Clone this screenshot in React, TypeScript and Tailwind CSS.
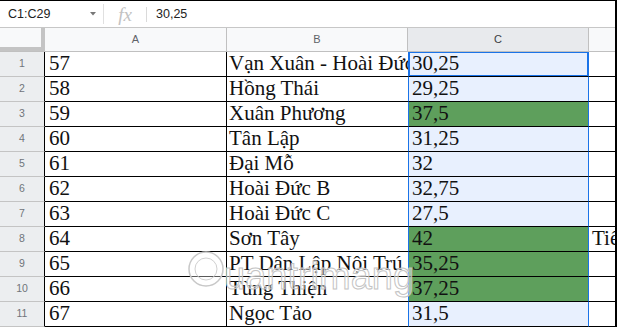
import React from "react"

const rows = [
  { a: "57", b: "Vạn Xuân - Hoài Đức", c: "30,25" },
  { a: "58", b: "Hồng Thái", c: "29,25" },
  { a: "59", b: "Xuân Phương", c: "37,5", green: true },
  { a: "60", b: "Tân Lập", c: "31,25" },
  { a: "61", b: "Đại Mỗ", c: "32" },
  { a: "62", b: "Hoài Đức B", c: "32,75" },
  { a: "63", b: "Hoài Đức C", c: "27,5" },
  { a: "64", b: "Sơn Tây", c: "42", green: true, d: "Tiến Thịnh" },
  { a: "65", b: "PT Dân Lập Nội Trú", c: "35,25", green: true },
  { a: "66", b: "Tùng Thiện", c: "37,25", green: true },
  { a: "67", b: "Ngọc Tảo", c: "31,5" },
]

const cellText = "font-['Liberation_Serif',serif] text-[21px] leading-none text-[#111]"

export default function App() {
  return (
    <div className="relative w-[617px] h-[327px] overflow-hidden bg-white border-t border-r-2 border-black font-['Liberation_Sans',Arial,sans-serif]">
      {/* formula bar */}
      <div className="flex items-center h-[27px] border-b border-[#c7c7c7] text-[12.5px] text-[#222]">
        <div className="w-[88px] pl-[8px]">C1:C29</div>
        <svg width="6" height="4" viewBox="0 0 6 4" className="ml-[2px]">
          <path d="M0 0h6L3 3.5z" fill="#777" />
        </svg>
        <div className="ml-[7px] w-px h-[20px] bg-[#e0e0e0]" />
        <div className="w-[42px] text-center font-['Liberation_Serif',serif] italic text-[19px] text-[#c2c2c2] leading-none">
          fx
        </div>
        <div className="w-px h-[15px] bg-[#dadada]" />
        <div className="pl-[9px]">30,25</div>
      </div>

      {/* column headers */}
      <div className="flex h-[24px] border-b border-[#c0c0c0] text-[11px] text-[#5f6368] bg-[#f8f9fa]">
        <div className="w-[45px] border-r-4 border-b-4 border-[#c4c4c4] bg-[#f8f9fa]" />
        <div className="w-[182px] flex items-center justify-center border-r border-[#c0c0c0]">A</div>
        <div className="w-[181px] flex items-center justify-center border-r border-[#c0c0c0]">B</div>
        <div className="w-[181px] flex items-center justify-center border-r border-[#c0c0c0] bg-[#e8eaed] text-[#3c4043]">
          C
        </div>
        <div className="flex-1" />
      </div>

      {/* rows */}
      {rows.map((r, i) => (
        <div key={i} className="flex h-[25px]">
          <div className="w-[45px] shrink-0 flex items-center justify-center border-r border-black border-b border-b-[#c4c4c4] bg-[#eceef0] text-[10.5px] text-[#70757a]">
            {i + 1}
          </div>
          <div className={`w-[182px] shrink-0 flex items-end pl-[4px] pb-[2px] border-r border-b border-black overflow-hidden whitespace-nowrap ${cellText}`}>
            {r.a}
          </div>
          <div className={`w-[181px] shrink-0 flex items-end pl-[2px] pb-[2px] border-b border-black overflow-hidden whitespace-nowrap ${cellText}`}>
            {r.b}
          </div>
          <div
            className={`relative w-[181px] shrink-0 flex items-end pl-[3px] pb-[2px] border-b border-b-black border-x border-x-[#1a73e8] overflow-hidden whitespace-nowrap ${cellText} ${
              r.green ? "bg-[#5e9f5c] text-[#1c2a1c]" : "bg-[#e8f0fe]"
            }`}
          >
            {r.c}
            {i === 0 && <div className="absolute -left-px -top-px -right-px -bottom-px border-2 border-[#1a73e8]" />}
          </div>
          <div className={`flex-1 flex items-end pl-[3px] pb-[2px] border-b border-black overflow-hidden whitespace-nowrap ${cellText}`}>
            {r.d ?? ""}
          </div>
        </div>
      ))}

      {/* watermark */}
      <svg className="absolute left-[186px] top-[244px] pointer-events-none" width="250" height="56" viewBox="0 0 250 56">
        <circle cx="20" cy="24" r="17" fill="white" fillOpacity="0.35" stroke="#c8c8c8" strokeWidth="1.5" />
        <circle cx="20" cy="24" r="11" fill="none" stroke="#d0d0d0" strokeWidth="1" />
        <text
          x="38"
          y="44"
          fontFamily="Liberation Sans, Arial, sans-serif"
          fontSize="38"
          fill="white"
          fillOpacity="0.45"
          stroke="#c4c4c4"
          strokeWidth="1"
        >
          uantrimang
        </text>
      </svg>
    </div>
  )
}
